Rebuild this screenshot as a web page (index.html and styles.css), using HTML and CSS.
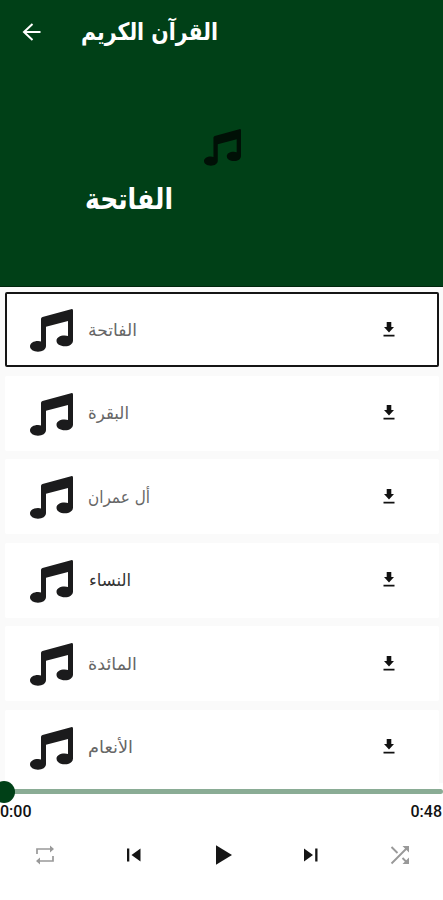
FILE: index.html
```
<!DOCTYPE html>
<html lang="ar">
<head>
<meta charset="utf-8">
<title>القرآن الكريم</title>
<link rel="stylesheet" href="styles.css">
</head>
<body>
<svg class="defs" aria-hidden="true">
  <symbol id="note" viewBox="0 0 43 43">
    <path d="M11 10Q11 8.500 12.500 8L41 .2Q43 -.2 43 1.500V31.500C43 35 39.500 37.300 35 37.300C30 37.300 26.500 35 26.500 31.800C26.500 28.500 30 26.500 34.500 26.500Q37 26.500 38 27V12L16 17.800V37C16 40.500 12.500 42.700 8 42.700C3.500 42.700 0 40.500 0 37.300C0 34.200 3.500 32 8 32Q10 32 11 32.500Z"/>
  </symbol>
  <symbol id="download" viewBox="0 0 12 15">
    <path d="M3.700 0H8.300V5H11L6 10.500L1 5H3.700ZM.5 12.800H11.500V14.500H.5Z"/>
  </symbol>
</svg>
<main class="app">
  <header class="hero">
    <div class="bar">
      <svg class="back" viewBox="0 0 18 18"><path d="M18 9H1.500M10 1L1.500 9L10 17"/></svg>
      <svg class="title" viewBox="0 0 137 40"><text x="0" y="28" textLength="137" lengthAdjust="spacingAndGlyphs">القرآن الكريم</text></svg>
    </div>
    <svg class="cover"><use href="#note"/></svg>
    <svg class="current" viewBox="0 0 88 40"><text x="0" y="27" textLength="88" lengthAdjust="spacingAndGlyphs">الفاتحة</text></svg>
  </header>
  <section class="list">
    <div class="card active"><svg class="note"><use href="#note"/></svg><svg class="name"><text x="0" y="21" textLength="49" lengthAdjust="spacingAndGlyphs">الفاتحة</text></svg><svg class="download"><use href="#download"/></svg></div>
    <div class="card"><svg class="note"><use href="#note"/></svg><svg class="name"><text x="0" y="21" textLength="41" lengthAdjust="spacingAndGlyphs">البقرة</text></svg><svg class="download"><use href="#download"/></svg></div>
    <div class="card"><svg class="note"><use href="#note"/></svg><svg class="name"><text x="0" y="21" textLength="62" lengthAdjust="spacingAndGlyphs">أل عمران</text></svg><svg class="download"><use href="#download"/></svg></div>
    <div class="card"><svg class="note"><use href="#note"/></svg><svg class="name dark"><text x="1" y="21" textLength="42" lengthAdjust="spacingAndGlyphs">النساء</text></svg><svg class="download"><use href="#download"/></svg></div>
    <div class="card"><svg class="note"><use href="#note"/></svg><svg class="name"><text x="0" y="21" textLength="49" lengthAdjust="spacingAndGlyphs">المائدة</text></svg><svg class="download"><use href="#download"/></svg></div>
    <div class="card"><svg class="note"><use href="#note"/></svg><svg class="name"><text x="0" y="21" textLength="45" lengthAdjust="spacingAndGlyphs">الأنعام</text></svg><svg class="download"><use href="#download"/></svg></div>
  </section>
  <footer class="player">
    <div class="track"><div class="thumb"></div></div>
    <div class="times"><span>0:00</span><span>0:48</span></div>
    <div class="controls">
      <svg class="muted" viewBox="0 0 24 24"><path d="M4 11V6H19M5 18H20V13" fill="none" stroke="#999" stroke-width="1.700"/><path d="M17 2.500L21 6L17 9.500ZM7 14.500L3 18L7 21.500Z" fill="#999"/></svg>
      <svg viewBox="0 0 24 24"><path d="M5 5.500H7.300V18.500H5ZM18.500 5.500V18.500L9.500 12Z"/></svg>
      <svg viewBox="0 0 24 24"><path d="M5 2.300L21 12L5 21.700Z"/></svg>
      <svg viewBox="0 0 24 24"><path d="M5 5.500L14 12L5 18.500ZM16.200 5.500H18.500V18.500H16.200Z"/></svg>
      <svg class="muted" viewBox="0 0 24 24"><path d="M3.500 20.500L19 5M3.500 4L9.500 10M14.500 15L19.500 20" fill="none" stroke="#999" stroke-width="1.900"/><path d="M14.500 3H21V9.500ZM21 14.500V21H14.500Z" fill="#999"/></svg>
    </div>
  </footer>
</main>
</body>
</html>
```

FILE: styles.css
```
body {
  margin: 0;
  background: #fff;
  font-family: "DejaVu Sans", sans-serif;
}
.defs {
  position: absolute;
  width: 0;
  height: 0;
}
.app {
  display: flex;
  flex-direction: column;
  width: 443px;
  height: 900px;
  overflow: hidden;
}
.hero {
  display: flex;
  flex-direction: column;
  box-sizing: border-box;
  height: 287px;
  padding-top: 14px;
  background: #004017;
  border-bottom: 1px solid #00260d;
}
.bar {
  display: flex;
  align-items: center;
  gap: 40px;
  height: 36px;
  padding-left: 22px;
}
.back {
  width: 19px;
  height: 18px;
  fill: none;
  stroke: #fff;
  stroke-width: 2;
}
.title {
  width: 137px;
  height: 40px;
  overflow: visible;
  fill: #fff;
  font-size: 24px;
  font-weight: bold;
}
.cover {
  width: 37px;
  height: 37px;
  margin: 79px 0 0 204px;
  fill: #001006;
}
.current {
  width: 88px;
  height: 40px;
  margin: 16px 0 0 85px;
  overflow: visible;
  fill: #fff;
  font-size: 29px;
  font-weight: bold;
}
.list {
  display: flex;
  flex-direction: column;
  gap: 8.5px;
  box-sizing: border-box;
  height: 496px;
  padding: 5px 4px 0 5px;
  overflow: hidden;
  background: #fafafa;
}
.card {
  display: flex;
  flex: none;
  align-items: center;
  box-sizing: border-box;
  height: 75px;
  padding: 0 44px 0 25px;
  border-radius: 2px;
  background: #fff;
}
.active {
  padding: 0 42px 0 23px;
  border: 2px solid #151515;
}
.note {
  width: 43px;
  height: 43px;
  margin-top: 2px;
  fill: #1b1b1c;
}
.name {
  width: 80px;
  height: 30px;
  margin: 0 auto 0 15px;
  overflow: visible;
  fill: #666;
  font-size: 17px;
}
.dark {
  fill: #333;
}
.download {
  width: 12px;
  height: 15px;
  margin-bottom: 1px;
  fill: #111;
}
.player {
  box-sizing: border-box;
  height: 117px;
  padding-top: 6px;
  background: #fff;
}
.track {
  position: relative;
  height: 5px;
  border-radius: 0 3px 3px 0;
  background: #8aac95;
}
.thumb {
  position: absolute;
  top: -8px;
  left: -7px;
  width: 22px;
  height: 22px;
  border-radius: 50%;
  background: #004017;
}
.times {
  display: flex;
  justify-content: space-between;
  margin: 9px 1px 0 0;
  color: #111;
  font: 500 16px/18px Roboto, sans-serif;
}
.controls {
  display: flex;
  justify-content: space-between;
  padding: 22px 31px 0 33px;
}
.controls svg {
  width: 24px;
  height: 24px;
  fill: #151515;
}
```
